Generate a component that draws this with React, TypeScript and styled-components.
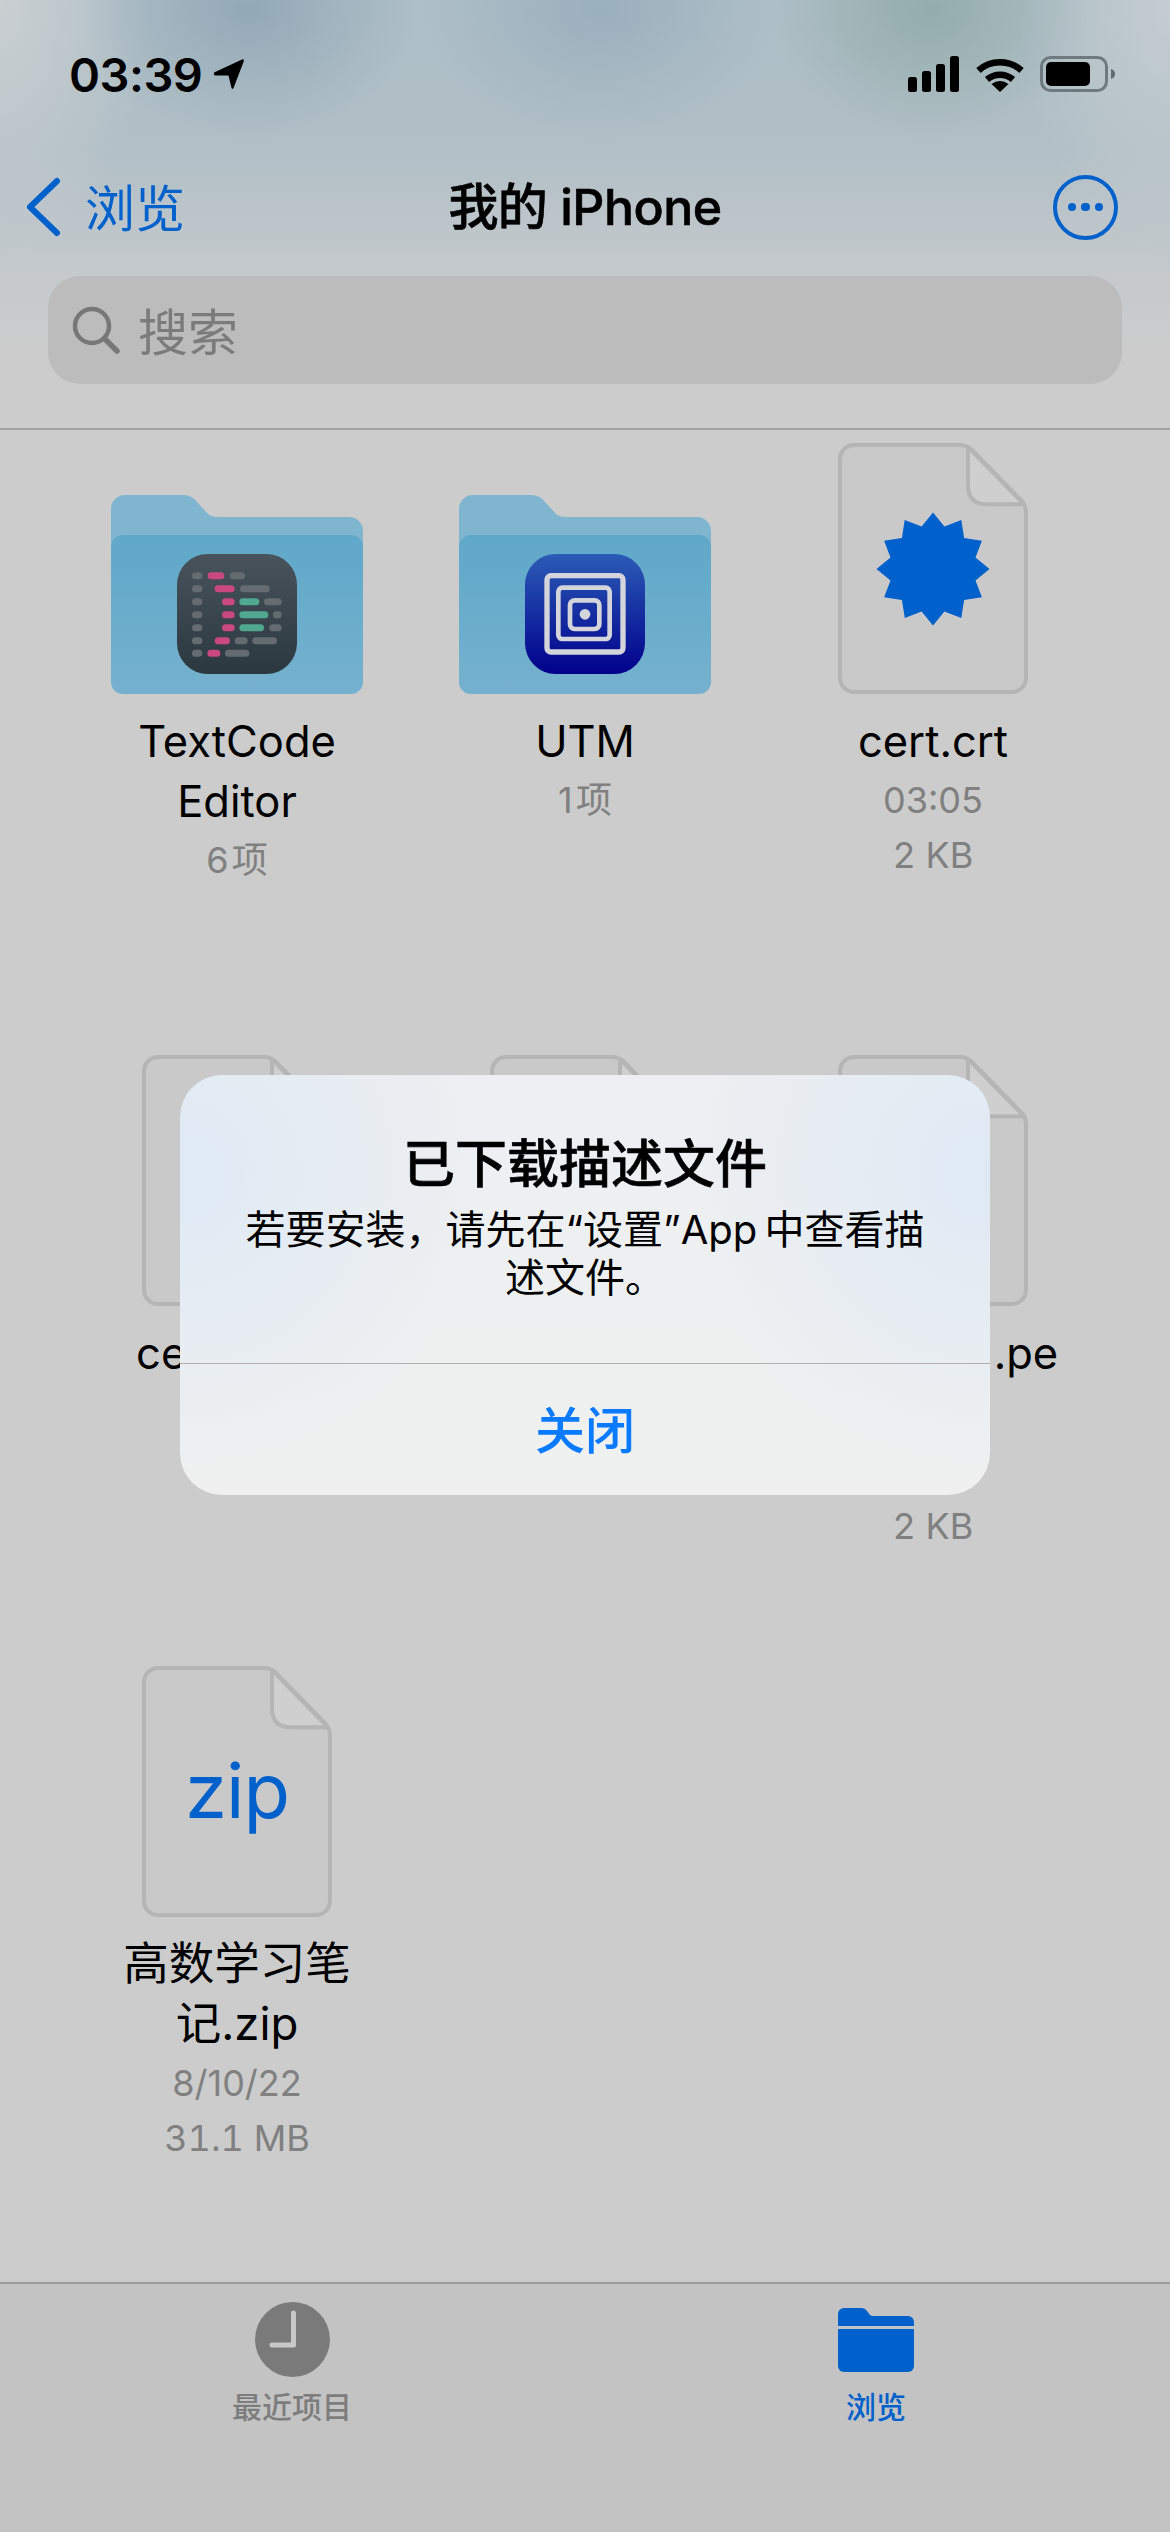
import React from 'react'
import styled, { createGlobalStyle } from 'styled-components'

const BLUE = '#0060cc'
const FONT = `Inter, 'Noto Sans CJK SC', sans-serif`

const GlobalStyle = createGlobalStyle`
  html, body {
    margin: 0;
    padding: 0;
    background: #cccccc;
    font-family: ${FONT};
  }
  * {
    box-sizing: border-box;
  }
`

type FileEntry = {
  id: string
  name: string
  lines: string[]
  kind: 'textcode' | 'utm' | 'cert' | 'blank' | 'zip'
  cjk?: boolean
}

// row two sits behind the alert, only the edges of its labels can be seen
const files: FileEntry[] = [
  { id: 'a', name: 'TextCode\nEditor', lines: ['6\u200a项'], kind: 'textcode' },
  { id: 'b', name: 'UTM', lines: ['1\u200a项'], kind: 'utm' },
  { id: 'c', name: 'cert.crt', lines: ['03:05', '2 KB'], kind: 'cert' },
  { id: 'd', name: 'cert1.pem', lines: [], kind: 'blank' },
  { id: 'e', name: '', lines: [], kind: 'blank' },
  { id: 'f', name: 'cert_k(0).pe\nm', lines: ['', '2 KB'], kind: 'blank' },
  { id: 'g', name: '高数学习笔\n记.zip', lines: ['8/10/22', '31.1 MB'], kind: 'zip', cjk: true },
]

const codeRows = [
  [['g', 96, 127], ['p', 143, 193], ['g', 209, 255]],
  [['g', 96, 127], ['p', 164, 224], ['g', 240, 329]],
  [['g', 96, 127], ['p', 186, 224], ['t', 238, 298], ['g', 312, 365]],
  [['g', 96, 127], ['p', 186, 224], ['t', 238, 325], ['g', 339, 365]],
  [['g', 96, 127], ['p', 186, 224], ['t', 238, 312], ['g', 328, 365]],
  [['g', 96, 127], ['p', 164, 210], ['g', 224, 263], ['g', 277, 351]],
  [['g', 96, 127], ['p', 142, 181], ['g', 195, 268]],
] as [string, number, number][][]

const codeColors: Record<string, string> = { g: '#646c72', p: '#c9487f', t: '#4fa88f' }
const codeRowY = [137, 176, 215, 254, 293, 332, 370]

const starPoints = Array.from({ length: 24 }, (_, i) => {
  const r = i % 2 === 0 ? 56.5 : 44
  const a = (i * Math.PI) / 12 - Math.PI / 2
  return `${(60 + r * Math.cos(a)).toFixed(1)},${(60 + r * Math.sin(a)).toFixed(1)}`
}).join(' ')

const TextCodeIcon = () => (
  <svg width="120" height="120" viewBox="51 72 360 360">
    <defs>
      <linearGradient id="tcBg" x1="0" y1="0" x2="0" y2="1">
        <stop offset="0" stopColor="#48535c" />
        <stop offset="1" stopColor="#2c3840" />
      </linearGradient>
    </defs>
    <rect x="51" y="72" width="360" height="360" rx="92" fill="url(#tcBg)" />
    {codeRows.map((row, i) =>
      row.map(([c, a, b]) => (
        <rect key={`${i}-${a}`} x={a} y={codeRowY[i] - 10.5} width={b - a} height="21" rx="10.5" fill={codeColors[c]} />
      ))
    )}
  </svg>
)

const UtmIcon = () => (
  <svg width="120" height="120" viewBox="45 73 360 360">
    <defs>
      <linearGradient id="utmBg" x1="0" y1="0" x2="0" y2="1">
        <stop offset="0" stopColor="#2b5cb6" />
        <stop offset="1" stopColor="#00008c" />
      </linearGradient>
    </defs>
    <rect x="45" y="73" width="360" height="360" rx="92" fill="url(#utmBg)" />
    <g fill="none" stroke="#d4d5da">
      <rect x="111" y="138" width="228" height="229" rx="12" strokeWidth="16" />
      <rect x="145" y="174" width="154" height="154" rx="12" strokeWidth="14" />
      <rect x="180" y="212" width="88" height="86" rx="14" strokeWidth="14" />
    </g>
    <circle cx="225" cy="254" r="16" fill="#d4d5da" />
  </svg>
)

const FolderArt = () => (
  <svg width="252" height="199" viewBox="0 0 252 199">
    <defs>
      <linearGradient id="folderFront" x1="0" y1="0" x2="0" y2="1">
        <stop offset="0" stopColor="#60a8c9" />
        <stop offset="1" stopColor="#75b1ce" />
      </linearGradient>
    </defs>
    <path
      d="M0 14a14 14 0 0 1 14-14h58q9 0 14 7l11 12q3 3 11 3h130a14 14 0 0 1 14 14v40H0z"
      fill="#7fb5cf"
    />
    <rect y="40" width="252" height="159" rx="12" fill="url(#folderFront)" />
  </svg>
)

const FileArt = () => (
  <FileSvg viewBox="0 0 190 250" preserveAspectRatio="none">
    <path
      d="M16 2H122q7 0 12 5l49 50q5 5 5 12V234a14 14 0 0 1-14 14H16a14 14 0 0 1-14-14V16A14 14 0 0 1 16 2z"
      fill="#c9c9c9"
      stroke="#b5b5b5"
      strokeWidth="4"
    />
    <path d="M130 4V42q0 19 19 19H186z" fill="#cfcfcf" stroke="#b5b5b5" strokeWidth="4" strokeLinejoin="round" />
  </FileSvg>
)

const Signal = () => (
  <svg width="52" height="36" viewBox="0 0 52 36" fill="#000">
    <rect x="0" y="21" width="9" height="15" rx="2.5" />
    <rect x="14" y="15" width="9" height="21" rx="2.5" />
    <rect x="28" y="8" width="9" height="28" rx="2.5" />
    <rect x="42" y="0" width="9" height="36" rx="2.5" />
  </svg>
)

const Wifi = () => (
  <svg width="48" height="36" viewBox="0 0 48 36" fill="none" stroke="#000" strokeWidth="6.5">
    <path d="M2.5 14.5C14.5 3.5 33.5 3.5 45.5 14.5" />
    <path d="M11 23.5C18.5 17 29.5 17 37 23.5" />
    <path d="M24 36L15.5 28Q24 22 32.5 28z" fill="#000" stroke="none" />
  </svg>
)

const Battery = () => (
  <svg width="75" height="36" viewBox="0 0 75 36">
    <rect x="1.5" y="1.5" width="65" height="33" rx="9" fill="none" stroke="#6e7a80" strokeWidth="3" />
    <rect x="6" y="6" width="44" height="24" rx="5" fill="#000" />
    <path d="M71 13q4 1 4 5t-4 5z" fill="#5f6b71" />
  </svg>
)

const FileCell = ({ file }: { file: FileEntry }) => {
  const isFolder = file.kind === 'textcode' || file.kind === 'utm'
  return (
    <Cell>
      <Thumb>
        {isFolder ? (
          <Folder>
            <FolderArt />
            <FolderBadge>{file.kind === 'utm' ? <UtmIcon /> : <TextCodeIcon />}</FolderBadge>
          </Folder>
        ) : (
          <FileBox>
            <FileArt />
            {file.kind === 'cert' && (
              <CertBadge width="120" height="120" viewBox="0 0 120 120">
                <polygon points={starPoints} fill={BLUE} />
              </CertBadge>
            )}
            {file.kind === 'zip' && <ZipLabel>zip</ZipLabel>}
          </FileBox>
        )}
      </Thumb>
      {file.name && <Name $cjk={file.cjk}>{file.name}</Name>}
      {file.lines.map((line, i) => (
        <Meta key={i} $size={line.endsWith('B')}>
          {line}
        </Meta>
      ))}
    </Cell>
  )
}

export default function App() {
  return (
    <Screen lang="zh-CN">
      <GlobalStyle />
      <Header>
        <StatusBar>
          <Clock>
            03:39
            <svg width="32" height="32" viewBox="0 0 32 32" fill="#000">
              <path d="M1 14.5L29 1.5Q31.5 0.5 30.7 3.5L20.5 30Q19.5 32 18.5 30L15.5 17.5L2 17.5Q0 16.5 1 14.5z" />
            </svg>
          </Clock>
          <StatusIcons>
            <Signal />
            <Wifi />
            <Battery />
          </StatusIcons>
        </StatusBar>
        <NavBar>
          <BackLink>
            <svg width="36" height="60" viewBox="0 0 36 60" fill="none" stroke={BLUE} strokeWidth="6" strokeLinecap="round" strokeLinejoin="round">
              <path d="M32 4L5 30L32 56" />
            </svg>
            <BackText>浏览</BackText>
          </BackLink>
          <NavTitle>我的 iPhone</NavTitle>
          <MoreButton>
            <MoreDot />
            <MoreDot />
            <MoreDot />
          </MoreButton>
        </NavBar>
        <SearchBox>
          <svg width="48" height="48" viewBox="0 0 48 48" fill="none" stroke="#777" strokeWidth="4.5" strokeLinecap="round">
            <circle cx="20" cy="20" r="17" />
            <path d="M32.5 32.5L45 45" strokeWidth="5.5" />
          </svg>
          <SearchText>搜索</SearchText>
        </SearchBox>
      </Header>

      <Grid>
        {files.map((file) => (
          <FileCell key={file.id} file={file} />
        ))}
      </Grid>

      <TabBar>
        <TabItem>
          <TabIcon>
            <svg width="75" height="75" viewBox="0 0 75 75">
              <circle cx="37.5" cy="37.5" r="37.5" fill="#7a7a7a" />
              <path d="M38.5 11V43H17" fill="none" stroke="#c8c8c8" strokeWidth="5" strokeLinecap="round" strokeLinejoin="round" />
            </svg>
          </TabIcon>
          <TabLabel>最近项目</TabLabel>
        </TabItem>
        <TabItem $active>
          <TabIcon>
            <svg width="76" height="64" viewBox="0 0 76 64" fill={BLUE}>
              <path d="M0 6a6 6 0 0 1 6-6h17q4 0 6 3l3 4q1 1 3 1h35a6 6 0 0 1 6 6v4H0z" />
              <path d="M0 21h76v37a6 6 0 0 1-6 6H6a6 6 0 0 1-6-6z" />
            </svg>
          </TabIcon>
          <TabLabel>浏览</TabLabel>
        </TabItem>
      </TabBar>

      <Alert>
        <AlertBody>
          <AlertTitle>已下载描述文件</AlertTitle>
          <AlertMessage>若要安装，请先在“设置”App{'\u2009'}中查看描述文件。</AlertMessage>
        </AlertBody>
        <AlertButton>关闭</AlertButton>
      </Alert>
    </Screen>
  )
}

const Screen = styled.div`
  position: relative;
  display: flex;
  flex-direction: column;
  width: 1170px;
  height: 2532px;
  overflow: hidden;
  background: #cccccc;
  color: #000;
`

const Header = styled.header`
  height: 430px;
  border-bottom: 2px solid #a2a2a2;
  background:
    radial-gradient(ellipse 160px 130px at 930px 10px, rgba(130, 160, 152, 0.6), transparent),
    radial-gradient(ellipse 180px 130px at 600px 10px, rgba(135, 160, 180, 0.5), transparent),
    radial-gradient(ellipse 170px 130px at 250px 10px, rgba(125, 150, 170, 0.55), transparent),
    radial-gradient(ellipse 150px 260px at 0 0, rgba(204, 208, 210, 0.95), transparent),
    radial-gradient(ellipse 150px 260px at 100% 0, rgba(200, 207, 210, 0.85), transparent),
    linear-gradient(to bottom, #aebfc7 0, #b1bfc6 150px, #c4c9cc 270px, #cccccc 350px);
`

const StatusBar = styled.div`
  display: flex;
  align-items: center;
  justify-content: space-between;
  height: 148px;
  padding: 0 55px 0 69px;
`

const Clock = styled.div`
  display: flex;
  align-items: center;
  gap: 11px;
  font-size: 47px;
  font-weight: 600;
  letter-spacing: -0.5px;
`

const StatusIcons = styled.div`
  display: flex;
  align-items: center;
  gap: 16px;
`

const NavBar = styled.nav`
  display: grid;
  grid-template-columns: 1fr auto 1fr;
  align-items: center;
  height: 118px;
  padding: 0 25px;
`

const BackLink = styled.div`
  display: flex;
  align-items: center;
  gap: 24px;
  color: ${BLUE};
  font-size: 50px;
`

const BackText = styled.span`
  margin-bottom: 4px;
`

const NavTitle = styled.div`
  margin-bottom: 9px;
  font-size: 50px;
  font-weight: 500;
  letter-spacing: -0.5px;
  -webkit-text-stroke: 0.6px #000;
`

const MoreButton = styled.div`
  justify-self: end;
  display: flex;
  align-items: center;
  justify-content: center;
  gap: 5px;
  width: 65px;
  height: 65px;
  margin-right: 27px;
  border: 4.5px solid ${BLUE};
  border-radius: 50%;
`

const MoreDot = styled.i`
  width: 8.5px;
  height: 8.5px;
  border-radius: 50%;
  background: ${BLUE};
`

const SearchBox = styled.div`
  display: flex;
  align-items: center;
  gap: 18px;
  height: 108px;
  margin: 10px 48px 0;
  padding: 0 24px;
  border-radius: 32px;
  background: #bcbcbc;
`

const SearchText = styled.span`
  margin-bottom: 2px;
  color: #7b7b7b;
  font-size: 50px;
`

const Grid = styled.main`
  flex: 1;
  display: grid;
  grid-template-columns: repeat(3, 348px);
  grid-auto-rows: 611.5px;
  justify-content: center;
  padding-top: 13px;
`

const Cell = styled.article`
  display: flex;
  flex-direction: column;
  align-items: center;
  text-align: center;
`

const Thumb = styled.div`
  display: flex;
  align-items: flex-end;
  height: 251px;
  margin-bottom: 17px;
`

const Folder = styled.div`
  position: relative;
  width: 252px;
  height: 199px;
  svg {
    display: block;
  }
`

const FolderBadge = styled.div`
  position: absolute;
  top: 59px;
  left: 66px;
`

const FileBox = styled.div`
  position: relative;
  display: flex;
  align-items: center;
  justify-content: center;
  width: 190px;
  height: 251px;
`

const FileSvg = styled.svg`
  position: absolute;
  inset: 0;
  width: 190px;
  height: 251px;
`

const CertBadge = styled.svg`
  position: relative;
`

const ZipLabel = styled.span`
  position: relative;
  padding-bottom: 4px;
  color: ${BLUE};
  font-size: 76px;
  letter-spacing: -1px;
  line-height: 1;
`

const Name = styled.div<{ $cjk?: boolean }>`
  margin-bottom: 2px;
  font-size: ${(props) => (props.$cjk ? '45.5px' : '43.5px')};
  line-height: 60px;
  white-space: pre-line;
`

const Meta = styled.div<{ $size?: boolean }>`
  min-height: 54.5px;
  color: #808080;
  font-size: 36px;
  font-variant-numeric: ${(props) => (props.$size ? 'tabular-nums' : 'normal')};
  line-height: 54.5px;
`

const TabBar = styled.footer`
  display: grid;
  grid-template-columns: 1fr 1fr;
  height: 250px;
  padding-right: 2px;
  border-top: 2px solid #9c9c9c;
  background: #c3c3c3;
`

const TabItem = styled.div<{ $active?: boolean }>`
  display: flex;
  flex-direction: column;
  align-items: center;
  padding-top: 18px;
  color: ${(props) => (props.$active ? BLUE : '#7d7d7d')};
`

const TabIcon = styled.div`
  display: flex;
  align-items: center;
  height: 75px;
  margin-bottom: 10px;
`

const TabLabel = styled.div`
  font-size: 30px;
  line-height: 40px;
  font-weight: 500;
`

const Alert = styled.div`
  position: absolute;
  top: 1075px;
  left: 180px;
  display: flex;
  flex-direction: column;
  width: 810px;
  height: 420px;
  border-radius: 42px;
  overflow: hidden;
  background:
    radial-gradient(ellipse 300px 300px at 0 100px, rgba(222, 233, 245, 0.95), transparent),
    radial-gradient(ellipse 300px 300px at 100% 100px, rgba(222, 233, 245, 0.95), transparent),
    linear-gradient(to bottom, #edeff1 0, #eef0f0 300px, #f0f0f0 100%);
`

const AlertBody = styled.div`
  height: 289px;
  padding: 60px 48px 0;
  border-bottom: 1.5px solid #b0b0b0;
  text-align: center;
`

const AlertTitle = styled.div`
  font-size: 52px;
  font-weight: 500;
  line-height: 60px;
  -webkit-text-stroke: 0.6px #000;
`

const AlertMessage = styled.div`
  margin-top: 11px;
  font-size: 40px;
  line-height: 47.5px;
`

const AlertButton = styled.div`
  flex: 1;
  display: flex;
  align-items: center;
  justify-content: center;
  padding-bottom: 5px;
  color: #0a7aff;
  font-size: 50px;
  font-weight: 500;
`
